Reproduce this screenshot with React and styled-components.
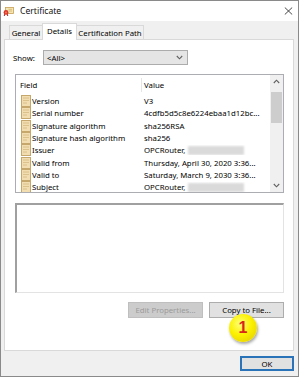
import React from 'react';
import styled, { createGlobalStyle } from 'styled-components';

const Global = createGlobalStyle`
  html, body { margin: 0; padding: 0; background: #ffffff; }
  body { font-family: "Noto Sans", "DejaVu Sans", sans-serif; }
  * { box-sizing: border-box; }
`;

const Window = styled.div`
  width: 299px;
  height: 377px;
  border: 1px solid #8a8a8a;
  background: #f0f0f0;
  display: flex;
  flex-direction: column;
  font-family: "Noto Sans", "DejaVu Sans", sans-serif;
  font-size: 7.8px;
  color: #000;
`;

const TitleBar = styled.div`
  height: 20px;
  background: #ffffff;
  display: flex;
  align-items: center;
  padding: 0 5px 0 2px;
`;

const TitleText = styled.span`
  margin-left: 6px;
  font-size: 8.6px;
  color: #111;
  flex: 1;
`;

const Body = styled.div`
  padding-top: 2px;
  display: flex;
  flex-direction: column;
  flex: 1;
`;

const TabRow = styled.div`
  display: flex;
  align-items: flex-end;
  height: 17px;
  padding-left: 8px;
  margin-bottom: -1px;
  position: relative;
  z-index: 1;
`;

const Tab = styled.div`
  width: ${p => p.$w}px;
  height: ${p => (p.$active ? 17 : 15)}px;
  margin-left: ${p => (p.$first ? 0 : -1)}px;
  border: 1px solid #d9d9d9;
  border-bottom: ${p => (p.$active ? 'none' : '1px solid #d9d9d9')};
  background: ${p => (p.$active ? '#ffffff' : '#f0f0f0')};
  display: flex;
  align-items: center;
  justify-content: center;
  padding-bottom: ${p => (p.$active ? 2 : 0)}px;
  white-space: nowrap;
  position: relative;
  z-index: ${p => (p.$active ? 2 : 1)};
`;

const Pane = styled.div`
  position: relative;
  margin: 0 4px 0 3px;
  height: 312px;
  background: #ffffff;
  border: 1px solid #d9d9d9;
  padding: 10px 0 0 10px;
  display: flex;
  flex-direction: column;
`;

const ShowRow = styled.div`
  display: flex;
  align-items: center;
  height: 15px;
  margin-left: -2px;
`;

const ShowLabel = styled.span`
  width: 30px;
`;

const Dropdown = styled.div`
  width: 145px;
  height: 15px;
  background: #e5e5e5;
  border: 1px solid #acacac;
  display: flex;
  align-items: center;
  justify-content: space-between;
  padding: 0 4px 0 3px;
`;

const ListBox = styled.div`
  margin-top: 9px;
  width: 269px;
  height: 119px;
  border: 1px solid #abadb3;
  display: flex;
  overflow: hidden;
`;

const ListContent = styled.div`
  flex: 1;
  overflow: hidden;
`;

const HeaderRow = styled.div`
  display: flex;
  height: 20px;
  padding-top: 3px;
`;

const HeaderCell = styled.div`
  width: ${p => (p.$w ? `${p.$w}px` : 'auto')};
  flex: ${p => (p.$w ? 'none' : 1)};
  padding-left: ${p => p.$pad}px;
  display: flex;
  align-items: center;
  border-right: ${p => (p.$w ? '1px solid #e5e5e5' : 'none')};
  height: 14px;
`;

const Row = styled.div`
  display: flex;
  align-items: center;
  height: 12.3px;
  white-space: nowrap;
`;

const FieldCell = styled.div`
  width: 127px;
  display: flex;
  align-items: center;
  padding-left: 5px;
  gap: 1px;
`;

const ValueCell = styled.div`
  flex: 1;
  padding-left: 1px;
  display: flex;
  align-items: center;
  gap: 3px;
  overflow: hidden;
`;

const Blurred = styled.span`
  display: inline-block;
  width: 56px;
  height: 9px;
  background: #dadada;
  filter: blur(1px);
`;

const ScrollBar = styled.div`
  width: 13px;
  background: #f0f0f0;
  display: flex;
  flex-direction: column;
`;

const ScrollArrow = styled.div`
  height: 13px;
  display: flex;
  align-items: center;
  justify-content: center;
`;

const ScrollTrack = styled.div`
  flex: 1;
  padding: 4px 1px 0 1px;
`;

const Thumb = styled.div`
  height: 31px;
  background: #cdcdcd;
`;

const DetailBox = styled.div`
  margin-top: 10px;
  width: 269px;
  height: 90px;
  border-top: 2px solid #a0a0a0;
  border-left: 2px solid #a0a0a0;
  border-right: 1px solid #e3e3e3;
  border-bottom: 1px solid #e3e3e3;
  background: #ffffff;
`;

const ButtonRow = styled.div`
  margin-top: 9px;
  width: 269px;
  display: flex;
  justify-content: flex-end;
  gap: 6px;
`;

const Button = styled.div`
  width: ${p => p.$w}px;
  height: ${p => p.$h}px;
  display: flex;
  align-items: center;
  justify-content: center;
  white-space: nowrap;
  background: ${p => (p.$disabled ? '#cccccc' : '#e1e1e1')};
  color: ${p => (p.$disabled ? '#9b9b9b' : '#000')};
  border: ${p => (p.$default ? '2px solid #2a73b8' : p.$disabled ? '1px solid #bfbfbf' : '1px solid #adadad')};
`;

const Badge = styled.div`
  position: absolute;
  left: 224px;
  top: 274px;
  width: 28px;
  height: 28px;
  border-radius: 50%;
  background: radial-gradient(circle at 40% 35%, #ffff7a 0%, #fbf100 45%, #e8d300 85%, #c9b400 100%);
  box-shadow: 1px 2px 3px rgba(0, 0, 0, 0.35);
  display: flex;
  align-items: center;
  justify-content: center;
  font-family: "Liberation Sans", Arial, sans-serif;
  font-weight: bold;
  font-size: 16px;
  color: #d8261c;
`;

const Footer = styled.div`
  display: flex;
  justify-content: flex-end;
  padding: 5px 4px 0 0;
`;

const CertIcon = () => (
  <svg width="11" height="9" viewBox="0 0 11 9">
    <rect x="2.5" y="0.5" width="8" height="6" fill="#f5e6b5" stroke="#c89f55" strokeWidth="0.8" />
    <line x1="5.5" y1="2.3" x2="9" y2="2.3" stroke="#c89f55" strokeWidth="0.6" />
    <line x1="5.5" y1="4" x2="9" y2="4" stroke="#c89f55" strokeWidth="0.6" />
    <path d="M2 6.5 L1.2 9 M4 6.5 L4.8 9" stroke="#a8231a" strokeWidth="1" />
    <circle cx="3" cy="5.4" r="2.4" fill="#d9372b" />
    <circle cx="3" cy="5.4" r="1" fill="#f07a5a" />
  </svg>
);

const FieldIcon = () => (
  <svg width="10" height="12" viewBox="0 0 10 12">
    <rect x="0.5" y="0.5" width="9" height="11" fill="#f1ddb0" stroke="#c7a86c" strokeWidth="1" />
    <line x1="2" y1="3" x2="8" y2="3" stroke="#d6ba80" strokeWidth="0.8" />
    <line x1="2" y1="5.5" x2="8" y2="5.5" stroke="#d6ba80" strokeWidth="0.8" />
    <line x1="2" y1="8" x2="6" y2="8" stroke="#d6ba80" strokeWidth="0.8" />
  </svg>
);

const Chevron = ({ up }) => (
  <svg width="7" height="5" viewBox="0 0 7 5">
    <path d={up ? 'M0.8 4 L3.5 1.2 L6.2 4' : 'M0.8 1 L3.5 3.8 L6.2 1'} fill="none" stroke="#606060" strokeWidth="1.1" />
  </svg>
);

const CloseIcon = () => (
  <svg width="9" height="8" viewBox="0 0 9 8">
    <path d="M0.8 0.5 L8.2 7.5 M8.2 0.5 L0.8 7.5" stroke="#333" strokeWidth="0.9" />
  </svg>
);

const rows = [
  ['Version', 'V3'],
  ['Serial number', '4cdfb5d5c8e6224ebaa1d12bc...'],
  ['Signature algorithm', 'sha256RSA'],
  ['Signature hash algorithm', 'sha256'],
  ['Issuer', 'OPCRouter,', true],
  ['Valid from', 'Thursday, April 30, 2020 3:36...'],
  ['Valid to', 'Saturday, March 9, 2030 3:36...'],
  ['Subject', 'OPCRouter,', true],
];

export default function App() {
  return (
    <>
      <Global />
      <Window>
        <TitleBar>
          <CertIcon />
          <TitleText>Certificate</TitleText>
          <CloseIcon />
        </TitleBar>
        <Body>
          <TabRow>
            <Tab $w={34} $first>General</Tab>
            <Tab $w={35} $active>Details</Tab>
            <Tab $w={68}>Certification Path</Tab>
          </TabRow>
          <Pane>
            <ShowRow>
              <ShowLabel>Show:</ShowLabel>
              <Dropdown>
                <span>&lt;All&gt;</span>
                <Chevron />
              </Dropdown>
            </ShowRow>
            <ListBox>
              <ListContent>
                <HeaderRow>
                  <HeaderCell $w={126} $pad={4}>Field</HeaderCell>
                  <HeaderCell $pad={2}>Value</HeaderCell>
                </HeaderRow>
                {rows.map(([f, v, blur]) => (
                  <Row key={f}>
                    <FieldCell>
                      <FieldIcon />
                      <span>{f}</span>
                    </FieldCell>
                    <ValueCell>
                      <span>{v}</span>
                      {blur && <Blurred />}
                    </ValueCell>
                  </Row>
                ))}
              </ListContent>
              <ScrollBar>
                <ScrollArrow><Chevron up /></ScrollArrow>
                <ScrollTrack><Thumb /></ScrollTrack>
                <ScrollArrow><Chevron /></ScrollArrow>
              </ScrollBar>
            </ListBox>
            <DetailBox />
            <ButtonRow>
              <Button $w={75} $h={16} $disabled>Edit Properties...</Button>
              <Button $w={75} $h={16}>Copy to File...</Button>
            </ButtonRow>
            <Badge>1</Badge>
          </Pane>
          <Footer>
            <Button $w={54} $h={15} $default>OK</Button>
          </Footer>
        </Body>
      </Window>
    </>
  );
}
